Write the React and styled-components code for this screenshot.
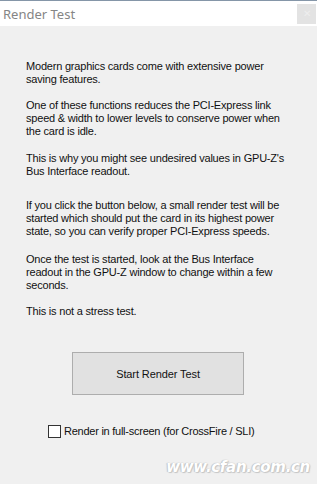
import React from "react";
import styled, { createGlobalStyle } from "styled-components";

const Global = createGlobalStyle`
  html, body { margin: 0; padding: 0; background: #f0f0f0; }
  #root { width: 317px; height: 484px; }
`;

const Window = styled.div`
  position: relative;
  width: 317px;
  height: 484px;
  box-sizing: border-box;
  border-top: 1px solid #8596a8;
  background: #f0f0f0;
  display: flex;
  flex-direction: column;
  overflow: hidden;
  font-family: "Liberation Sans", Arial, sans-serif;
`;

const TitleBar = styled.div`
  height: 25px;
  background: #ffffff;
  display: flex;
  align-items: center;
  justify-content: space-between;
  padding: 0 1px 0 3px;
`;

const Title = styled.span`
  font-family: "Noto Sans", "Open Sans", sans-serif;
  font-size: 13px;
  color: #858585;
`;

const CloseButton = styled.div`
  width: 19px;
  height: 20px;
  background: #e3e3e3;
  display: flex;
  align-items: center;
  justify-content: center;
  color: #eeeeee;
  font-size: 10px;
`;

const Content = styled.div`
  display: flex;
  flex-direction: column;
  padding: 34px 0 0 26px;
`;

const Para = styled.p`
  margin: ${(p) => p.$gap}px 0 0 0;
  font-size: 11px;
  line-height: 13px;
  letter-spacing: -0.2px;
  color: #111;
  white-space: nowrap;
`;

const Button = styled.div`
  margin: 34px 0 0 46px;
  width: 170px;
  height: 41px;
  border: 1px solid #adadad;
  background: #e1e1e1;
  display: flex;
  align-items: center;
  justify-content: center;
  font-size: 11px;
  letter-spacing: -0.1px;
  color: #111;
`;

const CheckRow = styled.label`
  margin: 30px 0 0 22px;
  display: flex;
  align-items: center;
  gap: 3px;
  font-size: 11px;
  line-height: 13px;
  letter-spacing: -0.25px;
  color: #111;
`;

const Box = styled.span`
  width: 11px;
  height: 11px;
  border: 1px solid #333;
  background: #fff;
  display: inline-block;
`;

const Watermark = styled.div`
  position: absolute;
  right: 7px;
  bottom: 8px;
  font-family: "DejaVu Sans", sans-serif;
  font-weight: bold;
  font-style: italic;
  font-size: 15px;
  letter-spacing: -0.3px;
  color: #ffffff;
  text-shadow: 0 0 1px #b5b5b5, 1px 1px 1px #c8c8c8, -1px 0 1px #c8c8c8;
`;

export default function App() {
  return (
    <>
      <Global />
      <Window>
        <TitleBar>
          <Title>Render Test</Title>
          <CloseButton>✕</CloseButton>
        </TitleBar>
        <Content>
          <Para $gap={0}>
            Modern graphics cards come with extensive power
            <br />
            saving features.
          </Para>
          <Para $gap={13}>
            One of these functions reduces the PCI-Express link
            <br />
            speed &amp; width to lower levels to conserve power when
            <br />
            the card is idle.
          </Para>
          <Para $gap={14}>
            This is why you might see undesired values in GPU-Z's
            <br />
            Bus Interface readout.
          </Para>
          <Para $gap={21}>
            If you click the button below, a small render test will be
            <br />
            started which should put the card in its highest power
            <br />
            state, so you can verify proper PCI-Express speeds.
          </Para>
          <Para $gap={15}>
            Once the test is started, look at the Bus Interface
            <br />
            readout in the GPU-Z window to change within a few
            <br />
            seconds.
          </Para>
          <Para $gap={13}>This is not a stress test.</Para>
          <Button>Start Render Test</Button>
          <CheckRow>
            <Box />
            Render in full-screen (for CrossFire / SLI)
          </CheckRow>
        </Content>
        <Watermark>www.cfan.com.cn</Watermark>
      </Window>
    </>
  );
}
